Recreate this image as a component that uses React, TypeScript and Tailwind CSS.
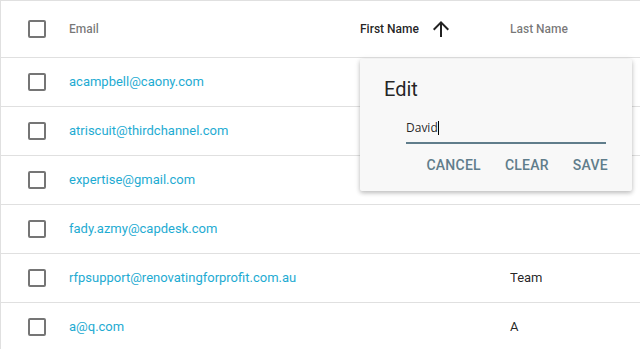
import React from "react";

const rows = [
  { email: "acampbell@caony.com", last: "" },
  { email: "atriscuit@thirdchannel.com", last: "" },
  { email: "expertise@gmail.com", last: "" },
  { email: "fady.azmy@capdesk.com", last: "" },
  { email: "rfpsupport@renovatingforprofit.com.au", last: "Team" },
  { email: "a@q.com", last: "A" },
];

function Box() {
  return <div className="w-[18px] h-[18px] border-2 border-[#757575] rounded-[2px] box-border" />;
}

export default function App() {
  return (
    <div className="relative w-[640px] h-[349px] overflow-hidden bg-white font-['Roboto',sans-serif]">
      <div className="w-[700px] border-l border-t border-[#e0e0e0]">
        <div className="flex items-center h-[57px] border-b border-[#e0e0e0]">
          <div className="w-[68px] pl-[27px] flex items-center">
            <Box />
          </div>
          <div className="w-[291px] text-[12px] font-medium text-[rgba(0,0,0,0.54)]">Email</div>
          <div className="w-[150px] flex items-center text-[12px] font-medium text-[rgba(0,0,0,0.87)]">
            <span>First Name</span>
            <svg className="ml-[10px]" width="24" height="24" viewBox="0 0 24 24" fill="rgba(0,0,0,0.87)">
              <path d="M4 12l1.41 1.41L11 7.83V20h2V7.83l5.58 5.59L20 12l-8-8-8 8z" />
            </svg>
          </div>
          <div className="text-[12px] font-medium text-[rgba(0,0,0,0.54)]">Last Name</div>
        </div>
        {rows.map((r) => (
          <div key={r.email} className="flex items-center h-[49px] border-b border-[#e0e0e0]">
            <div className="w-[68px] pl-[27px] flex items-center">
              <Box />
            </div>
            <div className="w-[291px] text-[13px] text-[#1eabd2] whitespace-nowrap">{r.email}</div>
            <div className="w-[150px]" />
            <div className="text-[13px] text-[rgba(0,0,0,0.87)]">{r.last}</div>
          </div>
        ))}
      </div>

      <div className="absolute left-[360px] top-[59px] w-[272px] h-[132px] bg-[#f8f8f8] rounded-[2px] shadow-[0_2px_4px_rgba(0,0,0,0.2),0_1px_6px_rgba(0,0,0,0.1)] pt-[18px] pb-[8px] flex flex-col">
        <div className="px-6 text-[20px] leading-[24px] text-[rgba(0,0,0,0.87)]">Edit</div>
        <div className="ml-[46px] w-[200px] mt-[19px] pb-[6px] border-b-2 border-[#607d8b]">
          <div className="flex items-center h-[16px] font-['Open_Sans',sans-serif] text-[12px] leading-[16px] text-[rgba(0,0,0,0.87)]">
            <span>David</span>
            <span className="inline-block w-px h-[14px] bg-black" />
          </div>
        </div>
        <div className="mt-[3px] flex justify-end gap-2 pr-4">
          <button className="h-[36px] px-2 text-[14px] font-medium uppercase tracking-[0.25px] text-[#607d8b]">Cancel</button>
          <button className="h-[36px] px-2 text-[14px] font-medium uppercase tracking-[0.25px] text-[#607d8b]">Clear</button>
          <button className="h-[36px] px-2 text-[14px] font-medium uppercase tracking-[0.25px] text-[#607d8b]">Save</button>
        </div>
      </div>
    </div>
  );
}
